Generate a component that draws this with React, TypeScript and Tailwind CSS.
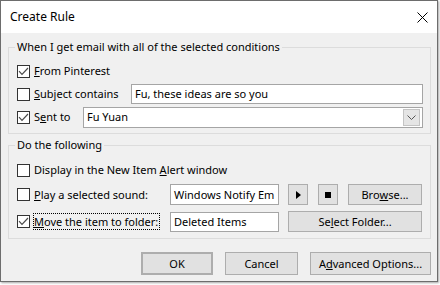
import React from 'react';

const Check = ({ checked }: { checked?: boolean }) => (
  <span className="w-[13px] h-[13px] border border-[#333333] bg-white flex items-center justify-center shrink-0">
    {checked && (
      <svg width="11" height="11" viewBox="0 0 11 11">
        <path d="M1 5.2 L4 8.3 L10 2" fill="none" stroke="#4a4a4a" strokeWidth="1.2" />
      </svg>
    )}
  </span>
);

const Btn = ({ children, className = '' }: { children: React.ReactNode; className?: string }) => (
  <button className={`h-[21px] bg-[#e1e1e1] border border-[#adadad] flex items-center justify-center shrink-0 whitespace-nowrap ${className}`}>
    {children}
  </button>
);

const Field = ({ value, className = '' }: { value: string; className?: string }) => (
  <div className={`bg-white border border-[#a5a5a5] pl-[3px] overflow-hidden whitespace-nowrap flex items-center shrink-0 ${className}`}>
    {value}
  </div>
);

export default function App() {
  return (
    <div className="w-[440px] h-[285px] bg-white font-['Noto_Sans',sans-serif] text-[11px] leading-[16px] text-black">
      <div className="w-[438px] h-[282px] border border-[#6d6d6d] bg-[#f0f0f0] shadow-[1px_1px_2px_rgba(0,0,0,0.35)] flex flex-col">
        <div className="h-[32px] shrink-0 bg-white flex items-center justify-between pl-[9px] pr-[9px]">
          <span className="text-[12px]">Create Rule</span>
          <svg width="11" height="11" viewBox="0 0 11 11">
            <path d="M0.5 0.5 L10.5 10.5 M10.5 0.5 L0.5 10.5" stroke="#000" strokeWidth="1" />
          </svg>
        </div>

        <div className="pl-[7px] pt-[6px] flex flex-col">
          <fieldset className="w-[423px] border border-[#dcdcdc] pl-[8px] pr-[7px] pb-[5px]">
            <legend className="-ml-[2px] px-[2px]">When I get email with all of the selected conditions</legend>
            <div className="flex flex-col pt-[5px]">
              <div className="h-[22px] flex items-center">
                <Check checked />
                <span className="ml-[4px]"><span className="underline">F</span>rom Pinterest</span>
              </div>
              <div className="h-[22px] mt-[1px] flex items-center">
                <Check />
                <span className="ml-[4px]"><span className="underline">S</span>ubject contains</span>
                <Field value="Fu, these ideas are so you" className="ml-auto w-[292px] h-[20px]" />
              </div>
              <div className="h-[22px] mt-[1px] flex items-center">
                <Check checked />
                <span className="ml-[4px]">S<span className="underline">e</span>nt to</span>
                <div className="ml-auto w-[340px] h-[21px] bg-white border border-[#a5a5a5] flex items-center pl-[3px] pr-[2px]">
                  <span className="flex-1">Fu Yuan</span>
                  <span className="w-[17px] h-[17px] bg-[#e5e5e5] border border-[#c4c4c4] flex items-center justify-center">
                    <svg width="9" height="5" viewBox="0 0 9 5">
                      <path d="M0.5 0.5 L4.5 4.5 L8.5 0.5" fill="none" stroke="#555" strokeWidth="1" />
                    </svg>
                  </span>
                </div>
              </div>
            </div>
          </fieldset>

          <fieldset className="w-[423px] mt-[3px] border border-[#dcdcdc] pl-[8px] pr-[8px] pb-[6px]">
            <legend className="-ml-[2px] px-[2px]">Do the following</legend>
            <div className="flex flex-col pt-[7px]">
              <div className="h-[20px] flex items-center">
                <Check />
                <span className="ml-[4px]">Display in the New Item <span className="underline">A</span>lert window</span>
              </div>
              <div className="h-[21px] mt-[4px] flex items-center">
                <Check />
                <span className="ml-[4px]"><span className="underline">P</span>lay a selected sound:</span>
                <Field value="Windows Notify Em" className="ml-auto w-[109px] h-[21px]" />
                <Btn className="ml-[9px] w-[20px]">
                  <svg width="5" height="8" viewBox="0 0 5 8"><path d="M0 0 L5 4 L0 8 Z" fill="#000" /></svg>
                </Btn>
                <Btn className="ml-[10px] w-[20px]">
                  <span className="w-[6px] h-[6px] bg-black" />
                </Btn>
                <Btn className="ml-[10px] w-[74px]">Bro<span className="underline">w</span>se...</Btn>
              </div>
              <div className="h-[21px] mt-[6px] flex items-center">
                <Check checked />
                <span className="ml-[3px] border border-dotted border-black leading-[15px] pr-[1px] whitespace-nowrap"><span className="underline">M</span>ove the item to folder:</span>
                <Field value="Deleted Items" className="ml-auto w-[109px] h-[20px]" />
                <Btn className="ml-[9px] w-[134px]">Se<span className="underline">l</span>ect Folder...</Btn>
              </div>
            </div>
          </fieldset>

          <div className="w-[423px] mt-[13px] flex justify-end gap-[12px]">
            <Btn className="w-[72px] h-[23px] border-2 border-[#0078d7]">OK</Btn>
            <Btn className="w-[73px] h-[23px]">Cancel</Btn>
            <Btn className="w-[121px] h-[23px]">A<span className="underline">d</span>vanced Options...</Btn>
          </div>
        </div>
      </div>
    </div>
  );
}
